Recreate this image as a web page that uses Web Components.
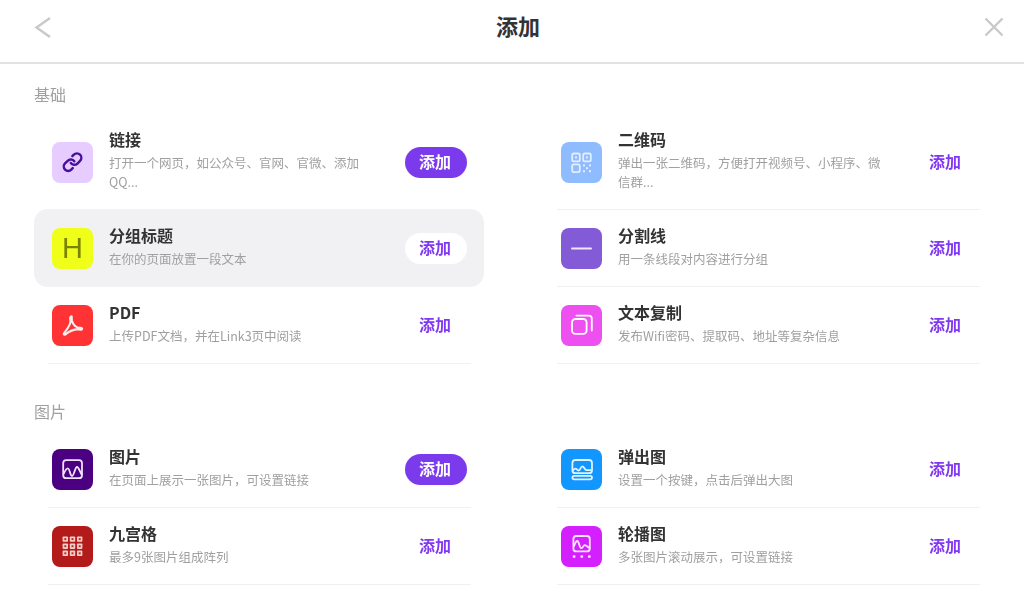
<!DOCTYPE html>
<html lang="zh-CN">
<head>
<meta charset="utf-8">
<title>添加</title>
<style>
html,body{margin:0;padding:0;background:#fff;overflow:hidden}
body{font-family:"Noto Sans CJK SC","Liberation Sans",sans-serif;width:1024px;height:611px}
</style>
</head>
<body>
<add-panel>
  <top-bar slot="head">添加</top-bar>
  <item-section label="基础">
    <add-item name="链接" desc="打开一个网页，如公众号、官网、官微、添加QQ..." bg="#e6ccff" active nosep>
      <svg viewBox="0 0 41 41" fill="none" stroke="#4b0f9e" stroke-width="2.8" stroke-linecap="round" stroke-linejoin="round"><g transform="translate(10 9.6) scale(.88)"><path d="M10 13a5 5 0 0 0 7.54.54l3-3a5 5 0 0 0-7.07-7.07l-1.72 1.71"/><path d="M14 11a5 5 0 0 0-7.54-.54l-3 3a5 5 0 0 0 7.07 7.07l1.71-1.71"/></g></svg>
    </add-item>
    <add-item name="二维码" desc="弹出一张二维码，方便打开视频号、小程序、微信群..." bg="#8fbbff">
      <svg viewBox="0 0 41 41" fill="none" stroke="#e3eeff" stroke-width="1.8"><rect x="11.2" y="11.5" width="7.6" height="7.8" rx="1.6"/><rect x="22.2" y="11.5" width="7.6" height="7.8" rx="1.6"/><rect x="11.2" y="22.4" width="7.6" height="7.8" rx="1.6"/><g fill="#e3eeff" stroke="none"><rect x="14" y="14.4" width="2" height="2"/><rect x="25" y="14.4" width="2" height="2"/><rect x="22" y="22.4" width="2" height="2"/><rect x="28" y="22.4" width="2" height="2"/><rect x="25" y="25.2" width="2" height="2"/><rect x="22" y="28.2" width="2" height="2"/><rect x="28" y="28.2" width="2" height="2"/></g></svg>
    </add-item>
    <add-item name="分组标题" desc="在你的页面放置一段文本" bg="#f0ff1a" hover nosep>
      <span class="h">H</span>
    </add-item>
    <add-item name="分割线" desc="用一条线段对内容进行分组" bg="#845bd6">
      <svg viewBox="0 0 41 41"><rect x="10" y="19.6" width="21" height="2" rx="1" fill="#efe8fb"/></svg>
    </add-item>
    <add-item name="PDF" desc="上传PDF文档，并在Link3页中阅读" bg="#ff3333">
      <svg viewBox="0 0 41 41" fill="none" stroke="#ffeeee" stroke-width="2.1" stroke-linejoin="round"><path d="M19.5 11.4c-1.4 0-1.5 1.6-1.1 3.4.7 3-2.4 8.6-6 12.8-1.4 1.6-.4 2.8 1.1 1.7 3-2.3 6.4-4.4 11-4.9 2.2-.2 4.3.8 5.3 0 .9-.8-.2-1.7-1.6-1.6-4.2.3-7.4-3.6-8.3-7.4-.4-2 .1-4-.4-4z"/></svg>
    </add-item>
    <add-item name="文本复制" desc="发布Wifi密码、提取码、地址等复杂信息" bg="#ee4ff0">
      <svg viewBox="0 0 41 41" fill="none" stroke="#fff" stroke-width="1.8" stroke-linecap="round"><rect x="11" y="14" width="14.6" height="14.8" rx="3.4"/><path d="M15.4 10.6h12.4a3 3 0 0 1 3 3v12"/></svg>
    </add-item>
  </item-section>
  <item-section label="图片">
    <add-item name="图片" desc="在页面上展示一张图片，可设置链接" bg="#4b0082" active>
      <svg viewBox="0 0 41 41" fill="none" stroke="#efe3fa" stroke-width="1.8" stroke-linejoin="round"><rect x="11.2" y="11.2" width="18.8" height="18" rx="3"/><path d="M11.6 25c1.400-3 2.900-6 4.400-5.500 2 .5 2 7.500 4 7.500s3-9 5-9 3 6 5 8"/></svg>
    </add-item>
    <add-item name="弹出图" desc="设置一个按键，点击后弹出大图" bg="#1296ff">
      <svg viewBox="0 0 41 41" fill="none" stroke="#e3f2ff" stroke-width="1.8" stroke-linejoin="round"><rect x="11.4" y="11" width="19.6" height="13.2" rx="3"/><rect x="11.4" y="26.8" width="19.6" height="3.6" rx="1.800"/><path d="M11.800 21.600c1.400-1.800 2.600-2.600 3.800-1.400 1.100 1.100 2.200 2 3.100.6 1-1.800 1.600-3.400 2.700-3.400 1.200 0 1.800 2 3 3.200 1 1 2.400.8 5.800.4"/></svg>
    </add-item>
    <add-item name="九宫格" desc="最多9张图片组成阵列" bg="#b31b1b">
      <svg viewBox="0 0 41 41"><g fill="#f3cdc9"><rect x="10.600" y="10.400" width="5.400" height="5.400" rx=".8"/><rect x="17.800" y="10.400" width="5.400" height="5.400" rx=".8"/><rect x="25" y="10.400" width="5.400" height="5.400" rx=".8"/><rect x="10.600" y="17.500" width="5.400" height="5.400" rx=".8"/><rect x="17.800" y="17.500" width="5.400" height="5.400" rx=".8"/><rect x="25" y="17.500" width="5.400" height="5.400" rx=".8"/><rect x="10.600" y="24.600" width="5.400" height="5.400" rx=".8"/><rect x="17.800" y="24.600" width="5.400" height="5.400" rx=".8"/><rect x="25" y="24.600" width="5.400" height="5.400" rx=".8"/></g><g fill="#b9322e"><rect x="12.300" y="12.100" width="2" height="2"/><rect x="19.500" y="12.100" width="2" height="2"/><rect x="26.700" y="12.100" width="2" height="2"/><rect x="12.300" y="19.200" width="2" height="2"/><rect x="19.500" y="19.200" width="2" height="2"/><rect x="26.700" y="19.200" width="2" height="2"/><rect x="12.300" y="26.300" width="2" height="2"/><rect x="19.500" y="26.300" width="2" height="2"/><rect x="26.700" y="26.300" width="2" height="2"/></g></svg>
    </add-item>
    <add-item name="轮播图" desc="多张图片滚动展示，可设置链接" bg="#d41fff">
      <svg viewBox="0 0 41 41" fill="none" stroke="#fbe6ff" stroke-width="1.8" stroke-linejoin="round"><rect x="12.400" y="10" width="16.400" height="15.400" rx="3"/><path d="M12.800 20.500c1-2 1.800-5.500 3.400-5.500 2 0 2 7 4 7.200 1.800.2 2-3 3.500-3 1.200 0 2.500 1 4.600 2.800"/><g fill="#fbe6ff" stroke="none"><rect x="11.800" y="29.200" width="2.600" height="2.600" rx=".6"/><rect x="19.500" y="29.200" width="2.600" height="2.600" rx=".6"/><rect x="27" y="29.200" width="2.600" height="2.600" rx=".6"/></g></svg>
    </add-item>
  </item-section>
</add-panel>

<template id="t-panel">
  <style>
    :host{display:block;filter:blur(.35px)}
    .body{display:flex;flex-direction:column;gap:35px;padding:18px 31px 0 34px}
  </style>
  <slot name="head"></slot>
  <div class="body"><slot></slot></div>
</template>

<template id="t-top">
  <style>
    :host{display:flex;align-items:center;justify-content:space-between;height:62px;border-bottom:2px solid #e2e2e2;padding:0 20px 0 34px;background:#fff}
    h1{margin:0 0 12px;font-size:22px;line-height:28px;font-weight:700;color:#333}
    svg{display:block;flex:none}
    .b{width:18px;height:22px;margin-top:-6px}
    .c{width:20px;height:20px;margin-top:-9px}
  </style>
  <svg class="b" viewBox="0 0 18 22" fill="none" stroke="#c9c9c9" stroke-width="2.400"><path d="M16 1 2.500 10.500 16 20"/></svg>
  <h1><slot></slot></h1>
  <svg class="c" viewBox="0 0 20 20" fill="none" stroke="#c9c9c9" stroke-width="2.400"><path d="M1.500 1.500 18.500 18.500M18.500 1.500 1.500 18.500"/></svg>
</template>

<template id="t-section">
  <style>
    :host{display:block}
    .label{font-size:16px;line-height:24px;color:#a0a0a0;margin-bottom:8px}
    .grid{display:grid;grid-template-columns:450px 450px;column-gap:59px;align-items:stretch}
  </style>
  <div class="label"></div>
  <div class="grid"><slot></slot></div>
</template>

<template id="t-item">
  <style>
    :host{display:flex;align-items:center;position:relative;padding:18px 17px 18px 18px;border-radius:14px;box-sizing:border-box;min-height:77px}
    :host([hover]){background:#f1f1f3;margin-top:-1px;padding-top:19px;min-height:78px}
    :host::after{content:"";position:absolute;left:14px;right:13px;bottom:0;height:1px;background:#f0f0f0}
    :host([nosep])::after{display:none}
    .ic{flex:none;width:41px;height:41px;border-radius:8px;display:flex;align-items:center;justify-content:center;overflow:hidden}
    ::slotted(svg){display:block;width:41px;height:41px}
    ::slotted(.h){font:400 29px/41px "Liberation Sans",sans-serif;color:#7a8200}
    .tx{margin-left:16px;width:266px}
    .n{font-size:16px;line-height:16px;font-weight:700;color:#333;margin:-1px 0 6px}
    .d{font-size:12.5px;line-height:19px;color:#a0a0a0;padding-bottom:1px}
    .btn{margin-left:auto;flex:none;box-sizing:border-box;width:62px;height:31px;border-radius:16px;font-size:16px;line-height:28px;font-weight:700;text-align:center;color:#8038f0}
    :host(:nth-child(odd)) .btn{padding-right:2px}
    :host([active]) .btn{background:#7c3aed;color:#fff}
    :host([hover]) .btn{background:#fff}
  </style>
  <div class="ic"><slot></slot></div>
  <div class="tx"><div class="n"></div><div class="d"></div></div>
  <div class="btn">添加</div>
</template>

<script>
function mount(el,id){
  const r=el.attachShadow({mode:"open"});
  r.appendChild(document.getElementById(id).content.cloneNode(true));
  return r;
}
customElements.define("add-panel",class extends HTMLElement{constructor(){super();mount(this,"t-panel")}});
customElements.define("top-bar",class extends HTMLElement{constructor(){super();mount(this,"t-top")}});
customElements.define("item-section",class extends HTMLElement{
  constructor(){super();this.r=mount(this,"t-section")}
  connectedCallback(){this.r.querySelector(".label").textContent=this.getAttribute("label")}
});
customElements.define("add-item",class extends HTMLElement{
  constructor(){super();this.r=mount(this,"t-item")}
  connectedCallback(){
    this.r.querySelector(".n").textContent=this.getAttribute("name");
    this.r.querySelector(".d").textContent=this.getAttribute("desc");
    this.r.querySelector(".ic").style.background=this.getAttribute("bg");
  }
});
</script>
</body>
</html>
